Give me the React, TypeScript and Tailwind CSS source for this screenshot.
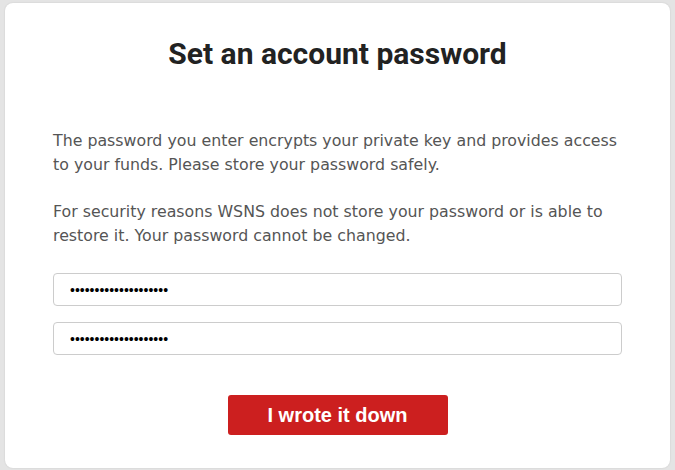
import React from "react";

export default function App() {
  return (
    <div className="w-[675px] h-[470px] bg-[#e4e4e4] pt-[3px] pl-[5px] pr-[5px] pb-[2px]">
      <div className="w-[665px] h-[465px] bg-white rounded-[8px] shadow-[0_0_2px_rgba(0,0,0,0.12)] px-[48px] flex flex-col">
        <h1
          className="text-center text-[30px] font-bold text-[#222] mt-[32px] leading-[38px]"
          style={{ fontFamily: "Roboto, sans-serif" }}
        >
          Set an account password
        </h1>
        <div
          className="mt-[56px] -mr-[4px] text-[15.8px] leading-[24px] text-[#555]"
          style={{ fontFamily: "'DejaVu Sans', sans-serif" }}
        >
          <p>
            The password you enter encrypts your private key and provides access
            <br />
            to your funds. Please store your password safely.
          </p>
          <p className="mt-[23px]">
            For security reasons WSNS does not store your password or is able to
            <br />
            restore it. Your password cannot be changed.
          </p>
        </div>
        <div className="mt-[25px] flex flex-col gap-[16px]">
          <input
            type="password"
            readOnly
            defaultValue="12345678901234567890"
            className="h-[33px] w-full border border-[#cccccc] rounded-[4px] px-[16px] text-[14px] text-black outline-none"
            style={{ fontFamily: "'Liberation Sans', Arial, sans-serif" }}
          />
          <input
            type="password"
            readOnly
            defaultValue="12345678901234567890"
            className="h-[33px] w-full border border-[#cccccc] rounded-[4px] px-[16px] text-[14px] text-black outline-none"
            style={{ fontFamily: "'Liberation Sans', Arial, sans-serif" }}
          />
        </div>
        <div className="flex justify-center mt-[40px]">
          <button
            className="w-[220px] h-[40px] bg-[#cc1f1f] rounded-[3px] text-white font-bold text-[20px]"
            style={{ fontFamily: "'Liberation Sans', Arial, sans-serif" }}
          >
            I wrote it down
          </button>
        </div>
      </div>
    </div>
  );
}
